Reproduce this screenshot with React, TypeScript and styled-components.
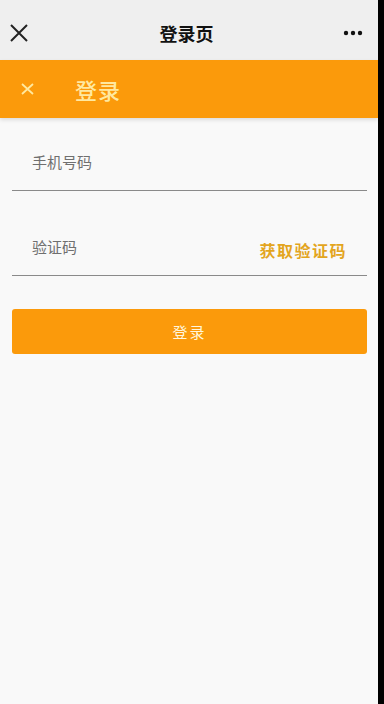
import React from "react";
import styled, { createGlobalStyle } from "styled-components";

const GlobalStyle = createGlobalStyle`
  html, body {
    margin: 0;
    padding: 0;
    background: #000;
  }
  body {
    font-family: "Noto Sans CJK SC", "Noto Sans", sans-serif;
  }
`;

const Screen = styled.div`
  width: 378px;
  min-height: 704px;
  background: #f9f9f9;
  display: flex;
  flex-direction: column;
`;

const NavBar = styled.div`
  height: 60px;
  background: #efefef;
  display: flex;
  align-items: center;
  justify-content: space-between;
  padding: 6px 15px 0 8px;
  box-sizing: border-box;
`;

const NavTitle = styled.div`
  font-size: 18px;
  font-weight: 700;
  color: #111;
`;

const IconBox = styled.div`
  width: 22px;
  height: 22px;
  display: flex;
  align-items: center;
  justify-content: center;
`;

const Header = styled.div`
  height: 58px;
  background: #fb9a0b;
  display: flex;
  align-items: center;
  padding: 0 0 0 16px;
  gap: 37px;
  box-shadow: 0 2px 4px rgba(0, 0, 0, 0.12);
`;

const HeaderTitle = styled.div`
  font-size: 22px;
  color: #ffe9a0;
  letter-spacing: 1px;
  font-weight: 500;
`;

const Form = styled.div`
  display: flex;
  flex-direction: column;
  padding: 0 11px 0 12px;
`;

const Field = styled.div<{ $h: number }>`
  height: ${(p) => p.$h}px;
  border-bottom: 1px solid #8a8a8a;
  display: flex;
  align-items: flex-end;
  justify-content: space-between;
  padding: 0 20px 18px 20px;
  box-sizing: border-box;
`;

const Placeholder = styled.span`
  font-size: 15px;
  color: #6f6f6f;
  line-height: 20px;
`;

const CodeLink = styled.span`
  font-size: 16px;
  color: #e3a51e;
  font-weight: 700;
  letter-spacing: 1.5px;
  line-height: 20px;
  margin-bottom: -3px;
`;

const LoginButton = styled.button`
  margin-top: 33px;
  height: 45px;
  border: none;
  border-radius: 3px;
  background: #fb9a0b;
  color: #fff6dc;
  font-family: inherit;
  font-size: 15px;
  letter-spacing: 2px;
`;

export default function App() {
  return (
    <>
      <GlobalStyle />
      <Screen>
        <NavBar>
          <IconBox>
            <svg width="20" height="20" viewBox="0 0 20 20">
              <path d="M2 2 L18 18 M18 2 L2 18" stroke="#222" strokeWidth="2" />
            </svg>
          </IconBox>
          <NavTitle>登录页</NavTitle>
          <svg width="20" height="6" viewBox="0 0 20 6">
            <circle cx="3" cy="3" r="2.2" fill="#111" />
            <circle cx="10" cy="3" r="2.2" fill="#111" />
            <circle cx="17" cy="3" r="2.2" fill="#111" />
          </svg>
        </NavBar>
        <Header>
          <IconBox>
            <svg width="13" height="12" viewBox="0 0 13 12">
              <path d="M1 1 L12 11 M12 1 L1 11" stroke="#ffe9a0" strokeWidth="1.8" />
            </svg>
          </IconBox>
          <HeaderTitle>登录</HeaderTitle>
        </Header>
        <Form>
          <Field $h={73}>
            <Placeholder>手机号码</Placeholder>
          </Field>
          <Field $h={85}>
            <Placeholder>验证码</Placeholder>
            <CodeLink>获取验证码</CodeLink>
          </Field>
          <LoginButton>登录</LoginButton>
        </Form>
      </Screen>
    </>
  );
}
